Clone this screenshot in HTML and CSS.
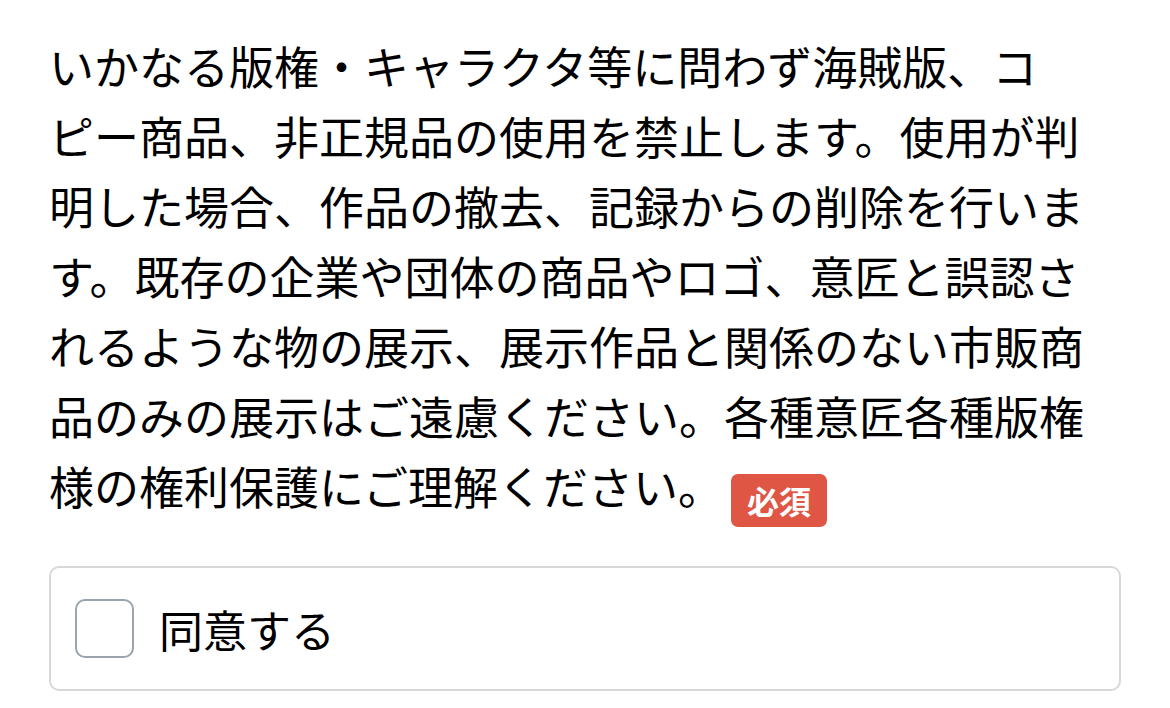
FILE: index.html
```html
<!DOCTYPE html>
<html lang="ja">
<head>
	<meta charset="UTF-8">
	<meta name="viewport" content="width=device-width, initial-scale=1.0">
	<title>出展規約</title>
	<link rel="stylesheet" href="styles.css">
</head>
<body>
	<div class="terms">
		<p class="terms-text">いかなる版権・キャラクタ等に問わず海賊版、コピー商品、非正規品の使用を禁止します。使用が判明した場合、作品の撤去、記録からの削除を行います。既存の企業や団体の商品やロゴ、意匠と誤認されるような物の展示、展示作品と関係のない市販商品のみの展示はご遠慮ください。各種意匠各種版権様の権利保護にご理解ください。<span class="required">必須</span></p>

		<label class="agree">
			<input type="checkbox" class="agree-check">
			<span class="agree-box"></span>
			<span class="agree-label">同意する</span>
		</label>
	</div>
</body>
</html>
```

FILE: styles.css
```css
body {
	margin: 0;
	background-color: #fff;
	color: #000;
	font-family: "Noto Sans CJK JP", "Noto Sans", sans-serif;
}

.terms {
	padding: 31px 49px 0;
}

.terms-text {
	margin: 0 0 39px;
	font-size: 45px;
	line-height: 70px;
	line-break: strict;
	text-spacing-trim: space-all;
}

/* badge after the last line of the terms */
.required {
	display: inline-block;
	vertical-align: -9px;
	margin-left: 8px;
	padding: 0 16px;
	height: 53px;
	line-height: 53px;
	font-size: 32px;
	font-weight: bold;
	color: #fff;
	background-color: #df5645;
	border-radius: 7px;
}

.agree {
	display: flex;
	align-items: center;
	gap: 25px;
	height: 121px;
	padding: 0 24px;
	border: 2px solid #d8d8d8;
	border-radius: 10px;
	cursor: pointer;
}

.agree-check {
	display: none;
}

.agree-box {
	width: 55px;
	height: 55px;
	border: 2.5px solid #9ba4ae;
	border-radius: 10px;
	background-color: #fff;
}

.agree-label {
	font-size: 44px;
	line-height: 1;
}
```
